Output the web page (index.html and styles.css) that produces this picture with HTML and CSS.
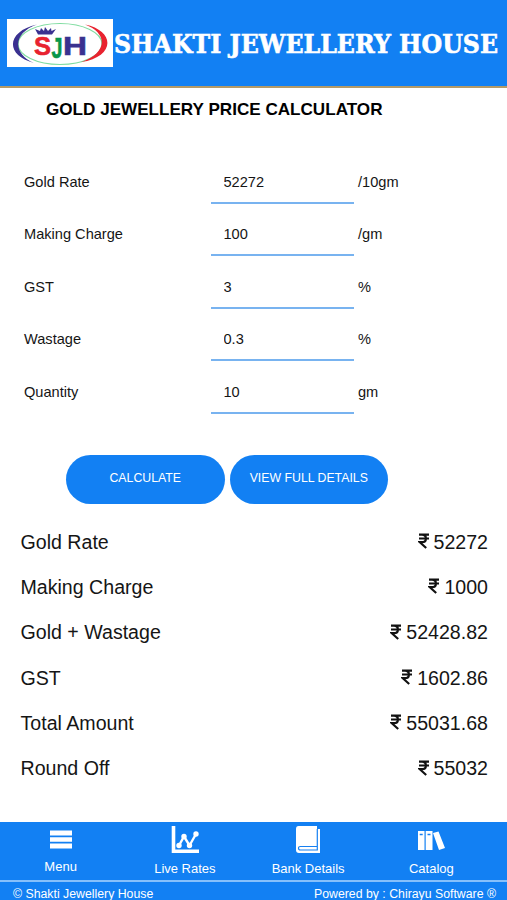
FILE: index.html
```html
<!DOCTYPE html>
<html lang="en">
<head>
<meta charset="utf-8">
<title>Shakti Jewellery House</title>
<link rel="stylesheet" href="styles.css">
</head>
<body>
<svg class="defs" width="0" height="0" aria-hidden="true">
  <symbol id="rupee" viewBox="0 0 12 16">
    <path d="M1 1.7H11M1 5.5H11M1.2 1.7H4C9.200 1.700 9.200 9.200 4 9.200H1.800L8.200 15" fill="none" stroke="#111" stroke-width="2.200"/>
  </symbol>
</svg>
<header class="header">
  <svg class="logo" viewBox="0 0 106 48">
    <rect width="106" height="48" fill="#fff"/>
    <ellipse cx="53" cy="25" rx="42" ry="20.500" fill="none" stroke="#7fdca0" stroke-width="1.200"/>
    <path d="M30 5.500C0 12 -3 36 27 44C5 34 6 14 30 5.500Z" fill="#3a3190"/>
    <path d="M78 5.500C109 12 108 38 74 43C101 34 101 14 78 5.500Z" fill="#e8232f"/>
    <path d="M31 15.500L28 10L33 12L34 9L37 12L38 8L41 12L44 9L44.500 12L49 10L45 15.500Z" fill="#3a3190"/>
    <text class="logo-text" y="35.700" x="27" textLength="17" lengthAdjust="spacingAndGlyphs">S</text>
    <text class="logo-text logo-j" y="38.700" x="44.500" textLength="11" lengthAdjust="spacingAndGlyphs">J</text>
    <text class="logo-text logo-h" y="35.700" x="56" textLength="24" lengthAdjust="spacingAndGlyphs">H</text>
  </svg>
  <svg class="brand" viewBox="0 0 392 60"><text class="brand-text" x="1" y="39.500" textLength="384" lengthAdjust="spacingAndGlyphs">SHAKTI JEWELLERY HOUSE</text></svg>
</header>
<main class="main">
  <h1 class="title">GOLD JEWELLERY PRICE CALCULATOR</h1>
  <form class="form">
    <label class="field"><span>Gold Rate</span><input value="52272"><span>/10gm</span></label>
    <label class="field"><span>Making Charge</span><input value="100"><span>/gm</span></label>
    <label class="field"><span>GST</span><input value="3"><span>%</span></label>
    <label class="field"><span>Wastage</span><input value="0.3"><span>%</span></label>
    <label class="field"><span>Quantity</span><input value="10"><span>gm</span></label>
  </form>
  <div class="actions"><button class="btn">CALCULATE</button><button class="btn">VIEW FULL DETAILS</button></div>
  <section class="results">
    <div class="result"><span>Gold Rate</span><span class="amount"><svg class="rupee"><use href="#rupee"/></svg>52272</span></div>
    <div class="result"><span>Making Charge</span><span class="amount"><svg class="rupee"><use href="#rupee"/></svg>1000</span></div>
    <div class="result"><span>Gold + Wastage</span><span class="amount"><svg class="rupee"><use href="#rupee"/></svg>52428.82</span></div>
    <div class="result"><span>GST</span><span class="amount"><svg class="rupee"><use href="#rupee"/></svg>1602.86</span></div>
    <div class="result"><span>Total Amount</span><span class="amount"><svg class="rupee"><use href="#rupee"/></svg>55031.68</span></div>
    <div class="result"><span>Round Off</span><span class="amount"><svg class="rupee"><use href="#rupee"/></svg>55032</span></div>
  </section>
</main>
<footer class="footer">
  <nav class="nav">
    <a class="tab tab-menu"><svg class="icon" viewBox="0 0 30 30"><path d="M4 5.500h22v5H4zM4 12.200h22v4.600H4zM4 18.500h22v5H4z" fill="#fff"/></svg><span>Menu</span></a>
    <a class="tab"><svg class="icon" viewBox="0 0 30 30"><path d="M3.500 1V26.200H29" fill="none" stroke="#fff" stroke-width="3.600"/><path d="M9 20.500L14 11.500L19.500 20.500L26 9" fill="none" stroke="#fff" stroke-width="2.400"/><g fill="#fff"><circle cx="9" cy="20.500" r="2.700"/><circle cx="14" cy="11.500" r="2.700"/><circle cx="19.500" cy="20.500" r="2.700"/><circle cx="26" cy="9" r="2.700"/></g></svg><span>Live Rates</span></a>
    <a class="tab"><svg class="icon" viewBox="0 0 30 30"><path d="M5.500 1H24V4H27V28H6Q3 28 3 25V4Q3 1 5.500 1Z" fill="#fff"/><path d="M24.300 4V25H7.500Q5.500 25 5.500 23.200T7.500 21.500H24" fill="none" stroke="#1680f2" stroke-width="1.200"/></svg><span>Bank Details</span></a>
    <a class="tab"><svg class="icon" viewBox="0 0 30 30"><path d="M2 6H8.500V25H2ZM9.700 6H16.500V25H9.700ZM17 8L22.500 6.500L29 23L23 25Z" fill="#fff"/><path d="M3.700 9.500H6.700M11.500 9.500H14.500" stroke="#1680f2" stroke-width="1.500"/></svg><span>Catalog</span></a>
  </nav>
  <div class="legal"><span>© Shakti Jewellery House</span><span class="powered">Powered by : Chirayu Software ®</span></div>
</footer>
</body>
</html>
```
FILE: styles.css
```css
* { box-sizing: border-box; }
body {
  margin: 0;
  height: 900px;
  display: flex;
  flex-direction: column;
  overflow: hidden;
  background: #fff;
  color: #151515;
  font-family: "Liberation Sans", Arial, sans-serif;
}
.defs { position: absolute; }
.header {
  height: 88px;
  flex: none;
  display: flex;
  align-items: center;
  padding-left: 7px;
  background: #1280f3;
  border-bottom: 2px solid #b39a68;
}
.logo { width: 106px; height: 48px; flex: none; }
.logo-text { font: bold 26px "Liberation Sans", sans-serif; fill: #e8232f; stroke: #e8232f; stroke-width: .6px; }
.logo-j { fill: #08964a; stroke: #08964a; font-size: 30px; }
.logo-h { fill: #3a3190; stroke: #3a3190; }
.brand { width: 392px; height: 60px; flex: none; overflow: visible; }
.brand-text {
  font: bold 26px "Roboto Slab", "DejaVu Serif", serif;
  fill: #fff;
  stroke: #fff;
  stroke-width: .6px;
}
.main { flex: 1; }
.title {
  margin: 12px 0 0 46px;
  font-size: 17.1px;
  line-height: 20px;
  color: #000;
  white-space: nowrap;
}
.form { padding: 31px 0 0 24px; }
.field {
  height: 52.5px;
  display: grid;
  grid-template-columns: 187px 143px 1fr;
  column-gap: 0;
  align-items: end;
  font-size: 14.6px;
}
.field span { line-height: 20px; padding-bottom: 12px; }
.field span:last-child { padding-left: 4px; }
.field input {
  width: 143px;
  height: 40px;
  padding: 0 12px 2px 12.5px;
  border: 0;
  border-bottom: 2px solid #78b3f0;
  border-radius: 0;
  background: none;
  color: inherit;
  font: inherit;
  outline: 0;
}
.actions { display: flex; gap: 5px; margin: 41.5px 0 0 66px; }
.btn {
  width: 158.5px;
  height: 49px;
  padding: 0 0 3px;
  border: 0;
  border-radius: 25px;
  background: #1280f3;
  color: #fff;
  font: 12.3px "Liberation Sans", Arial, sans-serif;
}
.results { padding: 15.5px 19px 0 20.5px; }
.result {
  height: 45.3px;
  display: flex;
  justify-content: space-between;
  align-items: center;
  font-size: 19.6px;
}
.amount { display: flex; align-items: center; }
.rupee { width: 12px; height: 16px; margin: 0 4px 2px 0; }
.footer {
  height: 78px;
  flex: none;
  background: #1280f3;
  color: #fff;
}
.nav {
  height: 60px;
  display: grid;
  grid-template-columns: repeat(4, 1fr);
  padding: 3px 14px 0 0;
  border-bottom: 2px solid #86c0fb;
}
.tab {
  display: flex;
  flex-direction: column;
  align-items: center;
  font-size: 13px;
  line-height: 16px;
}
.tab-menu { padding-right: 2px; }
.icon { width: 30px; height: 30px; }
.tab span { margin-top: 6px; }
.tab-menu span { margin-top: 4px; }
.legal {
  display: flex;
  justify-content: space-between;
  padding: 4px 11px 0 13px;
  font-size: 12.3px;
  line-height: 16px;
}
```
